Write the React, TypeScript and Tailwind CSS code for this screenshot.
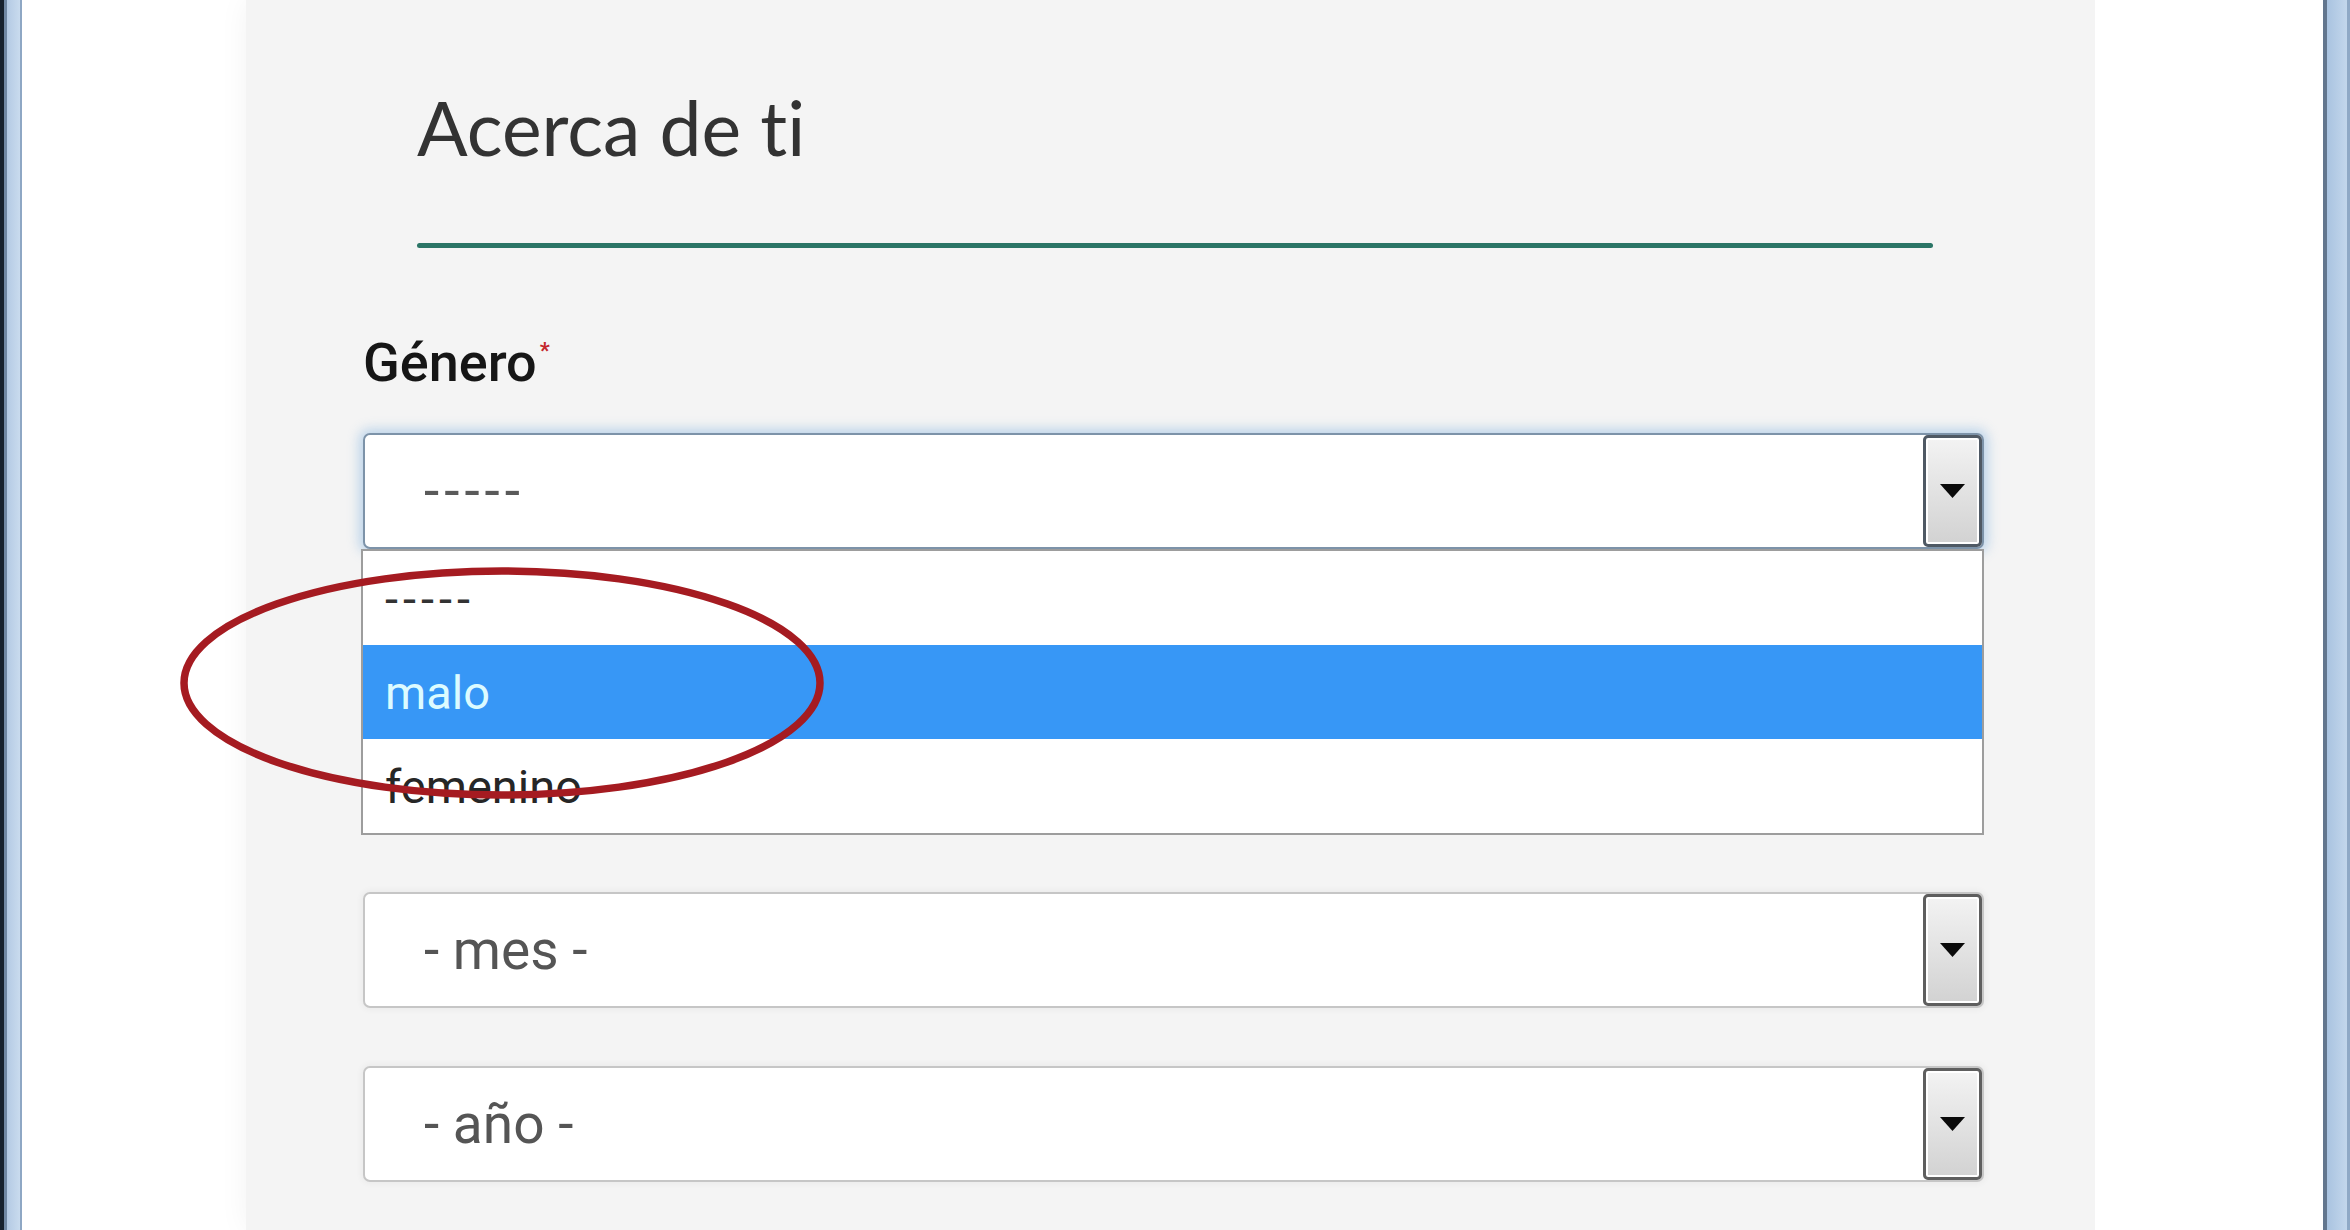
const roboto = { fontFamily: 'Roboto, "Liberation Sans", Arial, sans-serif' }

function Arrow() {
  return (
    <svg width="25" height="14" viewBox="0 0 25 14">
      <path d="M0 0 H25 L12.5 14 Z" fill="#0a0a0a" />
    </svg>
  )
}

interface SelectProps {
  text: string
  focused?: boolean
  dashes?: boolean
}

function FakeSelect({ text, focused = false, dashes = false }: SelectProps) {
  const outer = focused
    ? 'border-[#7d93a9] shadow-[0_0_12px_4px_rgba(120,172,222,0.45)]'
    : 'border-[#c6c6c6] shadow-[0_0_6px_2px_rgba(0,0,0,0.04)]'
  const btn = focused ? 'border-[#4f5964]' : 'border-[#5e5e5e]'

  return (
    <div className={`flex h-[116px] w-[1621px] rounded-[7px] border-2 bg-white ${outer}`}>
      <div
        className={`flex flex-1 items-center pl-[59px] text-[55px] leading-none ${dashes ? 'tracking-[5px] text-[#5a5a5a]' : 'text-[#555]'}`}
        style={roboto}
      >
        {text}
      </div>
      <div
        className={`flex w-[59px] items-center justify-center rounded-[5px] border-[3px] bg-linear-to-b from-[#f3f3f3] to-[#d2d2d2] shadow-[inset_0_0_0_2px_#ffffff] ${btn}`}
      >
        <Arrow />
      </div>
    </div>
  )
}

export default function App() {
  return (
    <div className="relative flex h-[1230px] w-[2350px] overflow-hidden bg-white">
      {/* left window frame */}
      <div className="flex w-[22px] shrink-0">
        <div className="w-[4px] bg-[#17222e]" />
        <div className="w-[3px] bg-[#7088a4]" />
        <div className="flex-1 bg-linear-to-r from-[#b4cae4] to-[#c9dbee]" />
        <div className="w-[2px] bg-[#8ea7c4]" />
      </div>

      <div className="w-[224px] shrink-0 bg-white" />

      {/* form panel */}
      <div className="flex w-[1849px] shrink-0 flex-col bg-[#f4f4f4] pl-[117px] pt-[90px] shadow-[0_0_28px_rgba(0,0,0,0.05)]">
        <h2
          className="ml-[54px] text-[75px] font-normal leading-none text-[#333] [font-variant-ligatures:none]"
          style={{ fontFamily: 'Lato, "Open Sans", sans-serif' }}
        >
          Acerca de ti
        </h2>
        <div className="ml-[54px] mt-[78px] h-[5px] w-[1516px] rounded-full bg-[#2b7566]" />

        <div className="mt-[88px] flex items-start" style={roboto}>
          <span className="text-[54px] font-medium leading-none text-[#161616]">Género</span>
          <span className="ml-[3px] mt-[4px] text-[22px] font-bold leading-none text-[#c4262c]">*</span>
        </div>

        <div className="relative mt-[43px] w-[1621px]">
          <FakeSelect text="-----" focused dashes />
          {/* open option list */}
          <div
            className="absolute left-[-2px] top-full z-10 w-[1623px] border-2 border-[#9d9d9d] bg-white text-[47px] leading-none"
            style={roboto}
          >
            <div className="flex h-[94px] items-center pl-[22px] tracking-[5px] text-[#333]">-----</div>
            <div className="flex h-[94px] items-center bg-[#3797f6] pl-[22px] text-[#dcfbff]">malo</div>
            <div className="flex h-[94px] items-center pl-[22px] text-[#262626]">femenino</div>
          </div>
        </div>

        <div className="mt-[343px]">
          <FakeSelect text="- mes -" />
        </div>
        <div className="mt-[58px]">
          <FakeSelect text="- año -" />
        </div>
      </div>

      <div className="flex-1 bg-white" />

      {/* right window frame */}
      <div className="flex w-[27px] shrink-0">
        <div className="w-[4px] bg-[#62768e]" />
        <div className="flex-1 bg-linear-to-r from-[#a9c3e0] to-[#c3d7ec]" />
        <div className="w-[3px] bg-[#8fa9c6]" />
      </div>

      {/* red annotation */}
      <svg className="pointer-events-none absolute left-0 top-0 z-20" width="2350" height="1230">
        <ellipse cx="502" cy="683" rx="318" ry="112" fill="none" stroke="#a51b21" strokeWidth="7.5" />
      </svg>
    </div>
  )
}
